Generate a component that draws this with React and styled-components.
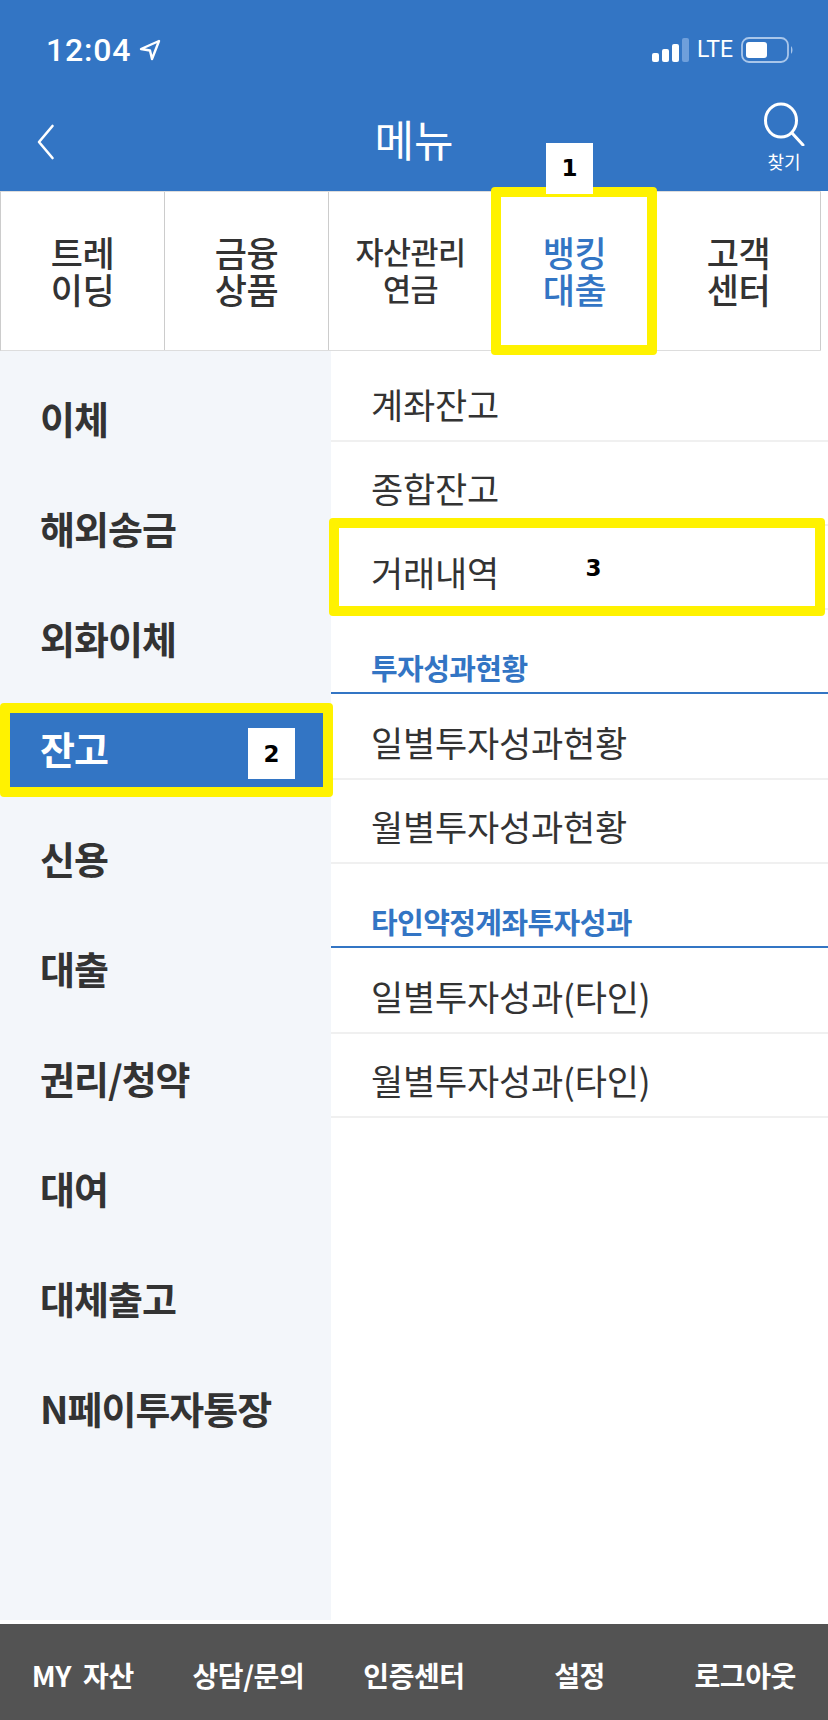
import React from 'react';
import styled, { createGlobalStyle } from 'styled-components';

const GlobalStyle = createGlobalStyle`
html,body{margin:0;padding:0;background:#fff;}
*{box-sizing:border-box;}
body{font-family:"Noto Sans CJK KR","Noto Sans",sans-serif;}
`;

const BLUE = '#3375c4';
const YELLOW = '#fff200';

const Page = styled.div`
width:828px;
height:1720px;
display:flex;
flex-direction:column;
background:#fff;
color:#333;
`;

const Header = styled.header`
height:191px;
background:${BLUE};
color:#fff;
flex:none;
`;

const StatusBar = styled.div`
height:96px;
padding:34px 35px 0 46px;
display:flex;
justify-content:space-between;
align-items:flex-start;
`;

const Clock = styled.div`
display:flex;
align-items:center;
gap:8px;
font-family:Roboto,sans-serif;
font-size:32px;
line-height:32px;
font-weight:500;
letter-spacing:.8px;
`;

const StatusIcons = styled.div`
display:flex;
align-items:center;
gap:8px;
height:32px;
`;

const NetworkLabel = styled.span`
font-family:Roboto,sans-serif;
font-size:23px;
line-height:24px;
font-weight:400;
`;

const NavBar = styled.div`
height:95px;
display:flex;
align-items:center;
justify-content:space-between;
padding:0 23px 0 37px;
position:relative;
`;

const BackButton = styled.svg`
width:18px;
height:36px;
margin-top:-3px;
`;

const PageTitle = styled.div`
position:absolute;
left:0;
right:0;
text-align:center;
font-size:43px;
line-height:60px;
top:12px;
font-weight:400;
`;

const SearchButton = styled.div`
display:flex;
flex-direction:column;
align-items:center;
width:42px;
margin-top:-14px;
`;

const SearchLabel = styled.span`
font-size:18px;
line-height:22px;
margin-top:4px;
white-space:nowrap;
`;

const Tabs = styled.nav`
height:160px;
flex:none;
display:flex;
width:821px;
border-top:1px solid #ddd;
border-bottom:1px solid #ddd;
border-left:1px solid #ccc;
position:relative;
`;

const Tab = styled.div`
flex:1;
display:flex;
align-items:center;
justify-content:center;
text-align:center;
position:relative;
padding-bottom:3px;
border-right:1px solid #ccc;
font-size:${({ $small }) => ($small ? '30.5px' : '35px')};
line-height:37px;
font-weight:500;
white-space:pre-line;
letter-spacing:-.5px;
color:${({ $active }) => ($active ? BLUE : '#333')};
`;

const Body = styled.div`
flex:1;
display:flex;
align-items:stretch;
min-height:0;
padding-bottom:4px;
`;

const Sidebar = styled.div`
width:331px;
flex:none;
background:#f3f6fa;
padding-top:11px;
`;

const SideItem = styled.div`
height:110px;
padding:0 0 0 40px;
display:flex;
align-items:center;
position:relative;
font-size:38px;
font-weight:700;
letter-spacing:-1px;
color:${({ $active }) => ($active ? '#fff' : '#333')};
`;

const SideText = styled.span`
position:relative;
z-index:2;
`;

const Panel = styled.div`
flex:1;
padding-top:7px;
`;

const Row = styled.div`
height:84px;
padding:8px 0 0 40px;
display:flex;
align-items:center;
position:relative;
font-size:35px;
font-weight:400;
letter-spacing:-.2px;
border-bottom:2px solid #f0f0f0;
`;

const SectionTitle = styled.div`
height:84px;
margin-bottom:2px;
padding:0 0 5px 40px;
display:flex;
align-items:flex-end;
font-size:29px;
line-height:40px;
font-weight:700;
letter-spacing:-.6px;
color:${BLUE};
border-bottom:2px solid ${BLUE};
`;

const Footer = styled.footer`
height:96px;
flex:none;
background:#535353;
display:grid;
grid-template-columns:repeat(5,1fr);
align-items:center;
padding-top:6px;
`;

const FooterItem = styled.div`
text-align:center;
color:#fff;
font-size:28px;
font-weight:700;
letter-spacing:-.4px;
word-spacing:6px;
white-space:nowrap;
`;

const Highlight = styled.div`
position:absolute;
top:${({ $top }) => $top}px;
bottom:${({ $bottom }) => $bottom}px;
left:${({ $left }) => $left}px;
right:${({ $right }) => $right}px;
border:10px solid ${YELLOW};
border-radius:4px;
background:${({ $fill }) => $fill || 'transparent'};
z-index:1;
`;

const Badge = styled.div`
position:absolute;
left:${({ $left }) => $left}px;
top:${({ $top }) => $top}px;
width:47px;
height:51px;
background:${({ $clear }) => ($clear ? 'transparent' : '#fff')};
display:flex;
align-items:center;
justify-content:center;
font-family:"DejaVu Sans",sans-serif;
font-size:23px;
font-weight:700;
letter-spacing:0;
color:#000;
z-index:3;
`;

const LocationArrow = () => (
  <svg width="22" height="22" viewBox="0 0 22 22" fill="none">
    <path d="M20 2 L2 10 L11 11.5 L13 20 Z" stroke="#fff" strokeWidth="2.4" strokeLinejoin="round" />
  </svg>
);

const Signal = () => (
  <svg width="37" height="24" viewBox="0 0 37 24">
    <rect x="0" y="15" width="7" height="9" rx="2" fill="#fff" />
    <rect x="10" y="11" width="7" height="13" rx="2" fill="#fff" />
    <rect x="20" y="6" width="7" height="18" rx="2" fill="#fff" />
    <rect x="30" y="0" width="7" height="24" rx="2" fill="#6f9fdb" />
  </svg>
);

const Battery = () => (
  <svg width="52" height="26" viewBox="0 0 52 26" fill="none">
    <rect x="1" y="1" width="46" height="24" rx="7" stroke="#a9c6ea" strokeWidth="1.8" />
    <rect x="5" y="5" width="21" height="16" rx="3" fill="#fff" />
    <path d="M50 9 C52 11 52 15 50 17 Z" fill="#a9c6ea" />
  </svg>
);

const SearchIcon = () => (
  <svg width="42" height="44" viewBox="0 0 42 44" fill="none" stroke="#fff" strokeWidth="3">
    <ellipse cx="18" cy="18.5" rx="15.5" ry="16.5" />
    <path d="M29 31 L40 43" strokeLinecap="round" />
  </svg>
);

const tabs = [
  { label: '트레\n이딩' },
  { label: '금융\n상품' },
  { label: '자산관리\n연금', small: true },
  { label: '뱅킹\n대출', active: true },
  { label: '고객\n센터' },
];

const sideItems = ['이체', '해외송금', '외화이체', '잔고', '신용', '대출', '권리/청약', '대여', '대체출고', 'N페이투자통장'];
const footerItems = ['MY 자산', '상담/문의', '인증센터', '설정', '로그아웃'];

export default function App() {
  return (
    <Page>
      <GlobalStyle />
      <Header>
        <StatusBar>
          <Clock>12:04<LocationArrow /></Clock>
          <StatusIcons>
            <Signal />
            <NetworkLabel>LTE</NetworkLabel>
            <Battery />
          </StatusIcons>
        </StatusBar>
        <NavBar>
          <BackButton viewBox="0 0 18 36" fill="none" stroke="#fff" strokeWidth="2.6" strokeLinecap="round" strokeLinejoin="round">
            <path d="M15.5 2 L2 18 L15.5 34" />
          </BackButton>
          <PageTitle>메뉴</PageTitle>
          <SearchButton>
            <SearchIcon />
            <SearchLabel>찾기</SearchLabel>
          </SearchButton>
        </NavBar>
      </Header>

      <Tabs>
        {tabs.map((t) => (
          <Tab key={t.label} $small={t.small} $active={t.active}>
            {t.label}
            {t.active && (
              <>
                <Highlight $top={-5} $bottom={-5} $left={-2} $right={-1} />
                <Badge $left={53} $top={-49}>1</Badge>
              </>
            )}
          </Tab>
        ))}
      </Tabs>

      <Body>
        <Sidebar>
          {sideItems.map((item) => (
            <SideItem key={item} $active={item === '잔고'}>
              <SideText>{item}</SideText>
              {item === '잔고' && (
                <>
                  <Highlight $top={11} $bottom={5} $left={0} $right={-2} $fill={BLUE} />
                  <Badge $left={248} $top={36}>2</Badge>
                </>
              )}
            </SideItem>
          ))}
        </Sidebar>
        <Panel>
          <Row>계좌잔고</Row>
          <Row>종합잔고</Row>
          <Row>
            거래내역
            <Highlight $top={-8} $bottom={-8} $left={-2} $right={3} />
            <Badge $clear $left={239} $top={16}>3</Badge>
          </Row>
          <SectionTitle>투자성과현황</SectionTitle>
          <Row>일별투자성과현황</Row>
          <Row>월별투자성과현황</Row>
          <SectionTitle>타인약정계좌투자성과</SectionTitle>
          <Row>일별투자성과(타인)</Row>
          <Row>월별투자성과(타인)</Row>
        </Panel>
      </Body>

      <Footer>
        {footerItems.map((item) => (
          <FooterItem key={item}>{item}</FooterItem>
        ))}
      </Footer>
    </Page>
  );
}
